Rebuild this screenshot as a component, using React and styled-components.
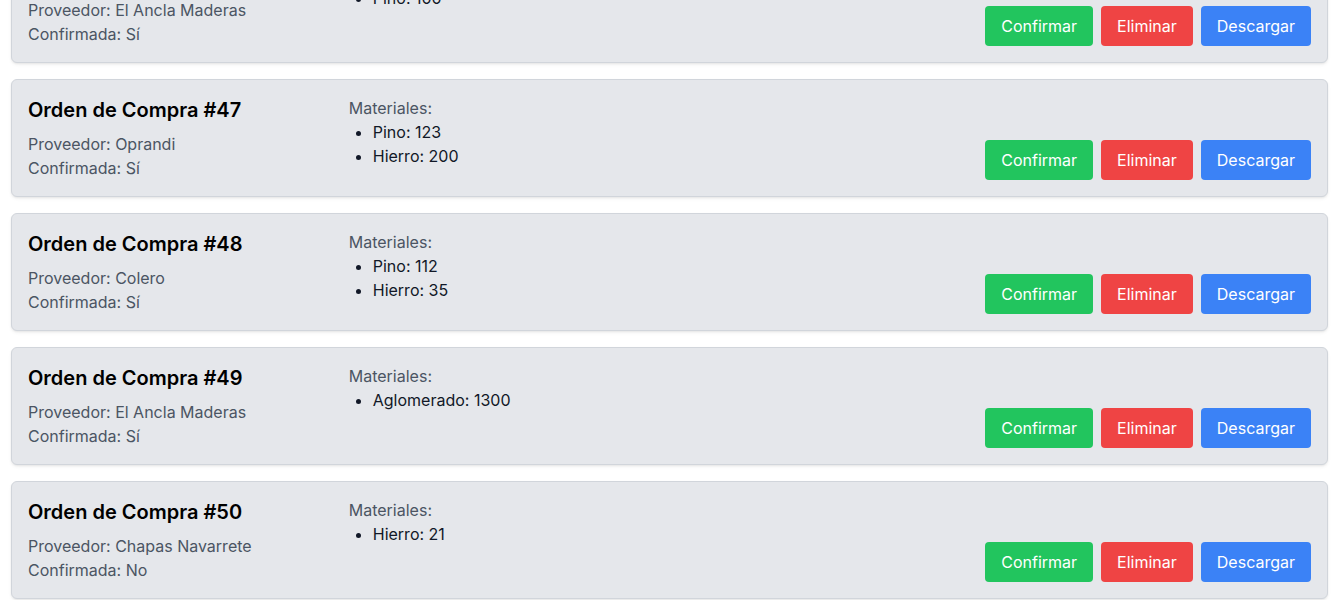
import React from 'react';
import styled, { createGlobalStyle } from 'styled-components';

const orders = [
  { id: 46, proveedor: 'El Ancla Maderas', confirmada: true, materiales: [{ nombre: 'Pino', cantidad: 100 }] },
  {
    id: 47,
    proveedor: 'Oprandi',
    confirmada: true,
    materiales: [
      { nombre: 'Pino', cantidad: 123 },
      { nombre: 'Hierro', cantidad: 200 },
    ],
  },
  {
    id: 48,
    proveedor: 'Colero',
    confirmada: true,
    materiales: [
      { nombre: 'Pino', cantidad: 112 },
      { nombre: 'Hierro', cantidad: 35 },
    ],
  },
  { id: 49, proveedor: 'El Ancla Maderas', confirmada: true, materiales: [{ nombre: 'Aglomerado', cantidad: 1300 }] },
  { id: 50, proveedor: 'Chapas Navarrete', confirmada: false, materiales: [{ nombre: 'Hierro', cantidad: 21 }] },
];

const GlobalStyle = createGlobalStyle`
  html, body {
    margin: 0;
    padding: 0;
    background: #ffffff;
    font-family: Inter, "Noto Sans", sans-serif;
  }
`;

const Viewport = styled.main`
  height: 100vh;
  overflow: hidden;
  display: flex;
  flex-direction: column;
  justify-content: flex-end;
`;

const OrderList = styled.div`
  display: flex;
  flex-direction: column;
  gap: 16px;
  padding: 0 7px 1px 11px;
`;

const Card = styled.div`
  display: flex;
  padding: 16px;
  background: #e5e7eb;
  border: 1px solid #d1d5db;
  border-radius: 6px;
  box-shadow: 0 2px 4px -1px rgba(0, 0, 0, 0.08), 0 1px 2px rgba(0, 0, 0, 0.05);
`;

const Info = styled.div`
  width: 25%;
  flex-shrink: 0;
`;

const Title = styled.h2`
  margin: 0 0 8px;
  font-size: 20px;
  line-height: 28px;
  font-weight: 600;
  color: #000000;
`;

const Detail = styled.p`
  margin: 0;
  font-size: 16px;
  line-height: 24px;
  color: #4b5563;
`;

const Materials = styled.div`
  flex: 1;
`;

const MaterialList = styled.ul`
  margin: 0;
  padding-left: 24px;
  list-style: disc;
`;

const MaterialItem = styled.li`
  font-size: 16px;
  line-height: 24px;
  color: #111827;
`;

const Actions = styled.div`
  display: flex;
  gap: 8px;
  align-self: flex-end;
`;

const colors = {
  green: '#22c55e',
  red: '#ef4444',
  blue: '#3b82f6',
};

const Button = styled.button`
  padding: 8px 16px;
  border: none;
  border-radius: 4px;
  background: ${({ $color }) => colors[$color]};
  color: #ffffff;
  font-family: inherit;
  font-size: 16px;
  line-height: 24px;
  cursor: pointer;
`;

const OrderCard = ({ order }) => (
  <Card>
    <Info>
      <Title>Orden de Compra #{order.id}</Title>
      <Detail>Proveedor: {order.proveedor}</Detail>
      <Detail>Confirmada: {order.confirmada ? 'Sí' : 'No'}</Detail>
    </Info>
    <Materials>
      <Detail>Materiales:</Detail>
      <MaterialList>
        {order.materiales.map((m) => (
          <MaterialItem key={m.nombre}>
            {m.nombre}: {m.cantidad}
          </MaterialItem>
        ))}
      </MaterialList>
    </Materials>
    <Actions>
      <Button $color="green">Confirmar</Button>
      <Button $color="red">Eliminar</Button>
      <Button $color="blue">Descargar</Button>
    </Actions>
  </Card>
);

export default function App() {
  return (
    <>
      <GlobalStyle />
      <Viewport>
        <OrderList>
          {orders.map((o) => (
            <OrderCard key={o.id} order={o} />
          ))}
        </OrderList>
      </Viewport>
    </>
  );
}
